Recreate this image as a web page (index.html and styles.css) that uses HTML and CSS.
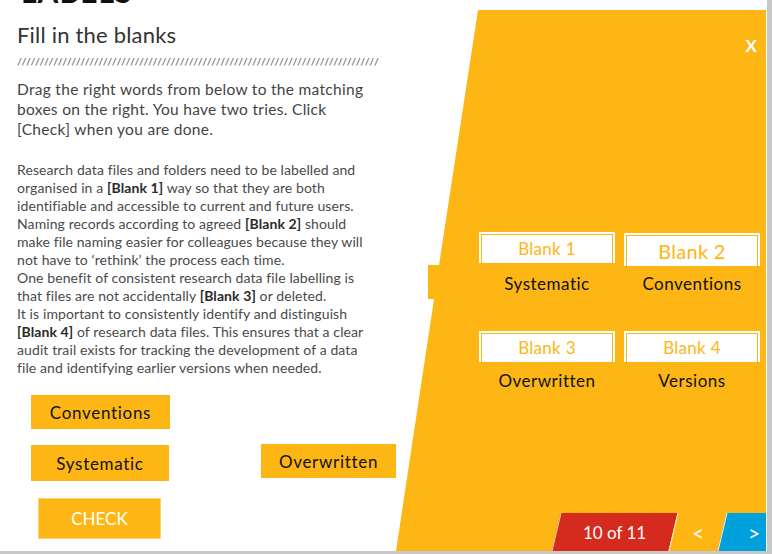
FILE: index.html
```html
<!DOCTYPE html>
<html lang="en">
<head>
<meta charset="utf-8">
<title>Fill in the blanks</title>
<link rel="stylesheet" href="styles.css">
</head>
<body>
<div class="stage">
  <section class="left">
    <div class="kicker">LABELS</div>
    <h1 class="title">Fill in the blanks</h1>
    <div class="slashes">////////////////////////////////////////////////////////////////////////////////</div>
    <p class="instructions">Drag the right words from below to the matching<br>boxes on the right. You have two tries. Click<br>[Check] when you are done.</p>
    <p class="passage">Research data files and folders need to be labelled and<br>organised in a <b>[Blank 1]</b> way so that they are both<br>identifiable and accessible to current and future users.<br>Naming records according to agreed <b>[Blank 2]</b> should<br>make file naming easier for colleagues because they will<br>not have to ‘rethink’ the process each time.<br>One benefit of consistent research data file labelling is<br>that files are not accidentally <b>[Blank 3]</b> or deleted.<br>It is important to consistently identify and distinguish<br><b>[Blank 4]</b> of research data files. This ensures that a clear<br>audit trail exists for tracking the development of a data<br>file and identifying earlier versions when needed.</p>
    <div class="tiles">
      <div class="tile-stack">
        <div class="tile tile-conv">Conventions</div>
        <div class="tile tile-sys">Systematic</div>
        <button class="check">CHECK</button>
      </div>
      <div class="tile tile-over">Overwritten</div>
    </div>
  </section>
  <section class="panel">
    <div class="close">X</div>
    <div class="blanks">
      <div class="slot">
        <div class="blank"><div class="blank-in">Blank 1</div></div>
        <div class="answer">Systematic</div>
      </div>
      <div class="slot">
        <div class="blank blank-lg"><div class="blank-in">Blank 2</div></div>
        <div class="answer answer-lg">Conventions</div>
      </div>
      <div class="slot slot-low">
        <div class="blank"><div class="blank-in">Blank 3</div></div>
        <div class="answer">Overwritten</div>
      </div>
      <div class="slot slot-low">
        <div class="blank"><div class="blank-in">Blank 4</div></div>
        <div class="answer">Versions</div>
      </div>
    </div>
    <nav class="pager">
      <div class="seg seg-red"><span>10 of 11</span></div>
      <div class="seg seg-yellow"><span>&lt;</span></div>
      <div class="seg seg-blue"><span>&gt;</span></div>
    </nav>
  </section>
</div>
</body>
</html>
```
FILE: styles.css
```css
* { box-sizing: border-box; }
html, body { margin: 0; padding: 0; }
body {
  background: #c8c8c8;
  font-family: Lato, "Open Sans", sans-serif;
  color: #4a4a4a;
  width: 772px;
  height: 554px;
  overflow: hidden;
}
.stage {
  width: 767px;
  height: 551px;
  background: #fff;
  display: flex;
  overflow: hidden;
}
.left {
  width: 396px;
  flex: none;
  padding-left: 17px;
}
.kicker {
  font-size: 30px;
  line-height: 30px;
  font-weight: 700;
  color: #111;
  margin-top: -24px;
  padding-left: 4px;
  letter-spacing: 1px;
}
.title {
  margin: 16px 0 0;
  font-size: 22px;
  line-height: 26px;
  font-weight: 400;
  color: #333;
  letter-spacing: 0.2px;
}
.slashes {
  margin-top: 9px;
  height: 10px;
  white-space: nowrap;
  font-family: "DejaVu Sans Mono", monospace;
  font-size: 8.5px;
  line-height: 10px;
  color: #555;
  letter-spacing: -0.6px;
}
.instructions {
  margin: 12px 0 0;
  font-size: 15.5px;
  line-height: 20px;
  color: #444;
  letter-spacing: 0.3px;
}
.passage {
  margin: 21.5px 0 0;
  font-size: 14px;
  line-height: 18px;
  color: #4a4a4a;
  white-space: nowrap;
  letter-spacing: 0.1px;
}
.passage b { font-weight: 700; color: #2a2a2a; }
.tiles {
  margin-top: 18.5px;
  padding-left: 14px;
  display: flex;
  align-items: flex-start;
}
.tile-stack {
  display: flex;
  flex-direction: column;
  align-items: flex-start;
}
.tile {
  background: #feb614;
  color: #111;
  font-size: 17px;
  letter-spacing: 0.7px;
  display: flex;
  align-items: center;
  justify-content: center;
}
.tile-conv { width: 139px; height: 34px; }
.tile-sys { width: 138px; height: 36px; margin-top: 16px; }
.tile-over { width: 137px; height: 34px; margin-top: 49px; margin-left: 91px; }
.check {
  margin: 17px 0 0 7px;
  width: 123px;
  height: 41px;
  background: #feb614;
  border: 1px solid #ffd26a;
  color: #fff;
  font-family: inherit;
  font-size: 17px;
  padding: 0;
}
.panel {
  width: 370px;
  flex: none;
  margin-top: 10px;
  height: 541px;
  background: #feb614;
  clip-path: polygon(82px 0, 100% 0, 100% 100%, 0 100%, 38px 289px, 32px 289px, 32px 255px, 43px 255px);
  display: flex;
  flex-direction: column;
}
.close {
  margin-top: 26px;
  align-self: flex-end;
  margin-right: 9px;
  color: #fff;
  font-size: 17px;
  line-height: 20px;
  font-weight: 700;
}
.blanks {
  margin-top: 176px;
  padding-left: 83px;
  display: grid;
  grid-template-columns: 136px 136px;
  column-gap: 9px;
  row-gap: 32px;
}
.blank {
  background: #fff;
  padding: 2px 2px 0;
}
.blank-in {
  border: 1px solid #feb614;
  border-bottom: 0;
  background: #fff;
  color: #feb614;
  text-align: center;
  font-size: 17px;
  letter-spacing: 0.3px;
  line-height: 28px;
}
.blank-lg { margin-top: 1px; }
.blank-lg .blank-in { font-size: 20px; line-height: 30px; }
.answer {
  margin-top: 6px;
  text-align: center;
  font-size: 17px;
  letter-spacing: 0.5px;
  line-height: 30px;
  color: #111;
}
.answer-lg { margin-top: 3px; }
.slot-low .answer { margin-top: 4px; }
.pager {
  margin-top: auto;
  margin-right: -19px;
  align-self: flex-end;
  display: flex;
  height: 38px;
}
.seg {
  height: 38px;
  transform: skewX(-13.3deg);
  display: flex;
  align-items: center;
  justify-content: center;
  color: #fff;
  font-size: 17px;
}
.seg span { transform: skewX(13.3deg); }
.seg-red { width: 117px; background: #d52b1e; border-left: 1px solid #f6d7a0; }
.seg-yellow { width: 49px; background: #feb614; border-left: 1px solid #fff3d6; font-size: 21px; }
.seg-blue { width: 63px; background: #00a0dc; border-left: 1px solid #fff3d6; font-size: 21px; }
```
